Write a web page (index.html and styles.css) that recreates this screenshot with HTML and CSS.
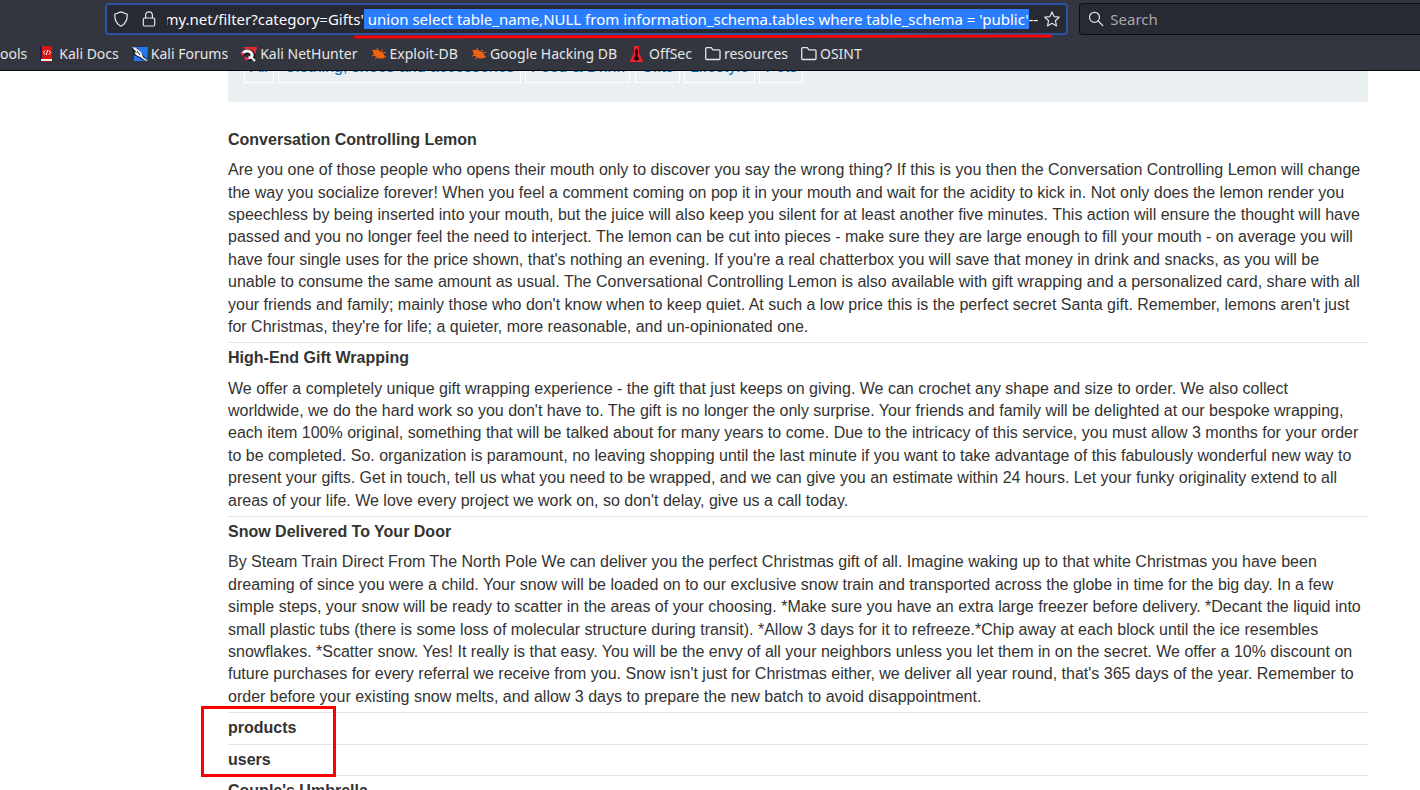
FILE: index.html
```html
<!DOCTYPE html>
<html lang="en">
<head>
<meta charset="utf-8">
<title>Gifts</title>
<link rel="stylesheet" href="styles.css">
</head>
<body>
<header class="chrome">
  <div class="toolbar">
    <div class="urlbar">
      <svg class="icon" viewBox="0 0 16 16" aria-hidden="true"><path d="M8 .9 14.3 3.3C14.4 9.500 12 13.400 8 15.200 4 13.400 1.600 9.500 1.700 3.300Z"/></svg>
      <svg class="icon lock" viewBox="0 0 16 16" aria-hidden="true"><rect x="2.300" y="7" width="11.400" height="8" rx="1.500"/><path d="M4.600 7V4.200a3.400 3.400 0 0 1 6.800 0V7"/></svg>
      <input class="url-input" id="url" type="text" aria-label="Address" spellcheck="false" value="https://academy.net/filter?category=Gifts' union select table_name,NULL from information_schema.tables where table_schema = 'public'--">
      <button class="star" type="button" aria-label="Bookmark this page"><svg class="icon" viewBox="0 0 16 16" aria-hidden="true"><path d="m8 .9 2.100 4.700 5.100.6-3.800 3.500 1.100 5.200L8 12.300l-4.500 2.600 1.100-5.200L.8 6.200l5.100-.6Z"/></svg></button>
    </div>
    <div class="searchbar">
      <svg class="icon" viewBox="0 0 16 16" aria-hidden="true"><circle cx="6.500" cy="6.300" r="5"/><path d="m10.200 10 4.600 4.600"/></svg>
      <input class="search-input" type="text" aria-label="Search" placeholder="Search">
    </div>
  </div>
  <nav class="bookmarks" aria-label="Bookmarks">
    <a class="bookmark" href="#">ools</a>
    <a class="bookmark" href="#"><svg class="fav" viewBox="0 0 16 16" aria-hidden="true"><path fill="#172554" d="M0 0h3v16H1l-1-1z"/><path fill="#d91414" d="M2 0h10v13H2z"/><path fill="#eee" d="M1 13h11v2H1z"/><path fill="#a10e12" d="M1 15h11v1H1z"/><path class="thin" d="M5 4.500 3.500 6.500 5 8.500M9 4.500l1.500 2-1.500 2M7.700 4 6.300 9"/></svg>Kali Docs</a>
    <a class="bookmark" href="#"><svg class="fav" viewBox="0 0 16 16" aria-hidden="true"><path fill="#2378ef" d="M2 1h14l-1 14H2z"/><path fill="#111722" d="M0 2 5 2l10 12-2 1L2 9z"/><path fill="#f4f4f4" d="m0 1 4 1 5 4 2 5 5 4-3-.4-4-3-5-2.600-2-3 3 1z"/><path stroke="#333" d="m5 5 3 4"/></svg>Kali Forums</a>
    <a class="bookmark" href="#"><svg class="fav" viewBox="0 0 16 16" aria-hidden="true"><path fill="#e92831" d="M2 1h14l-3 12z"/><path fill="none" stroke="#111" stroke-width="5" d="M1.500 8.500c3-4 8-4 10 0 1 3-2 4-5 4"/><path fill="none" stroke="#f5f5f5" stroke-width="3" d="M1 8c3-4 8-4 10 0 1 3-2 4-4 4"/><path stroke="#f5f5f5" stroke-width="2" d="m9 10 5 5"/><path stroke="#e92858" stroke-width="3" d="m.5 9 2-2M3.500 12l4 1"/></svg>Kali NetHunter</a>
    <a class="bookmark" href="#"><svg class="fav" viewBox="0 0 16 16" aria-hidden="true"><path fill="#ef6310" d="M2 5c2-2 5-1 6 0 3 0 5 3 6 6-2 2-6 2-8 0-2 0-4-3-4-6Z"/><path class="legs" d="m1 4 3 2M6 2l2 4M10 5l2-1M11 7l4-.5M1 10l4-1M4 13l3-2M13 10l2 1"/></svg>Exploit-DB</a>
    <a class="bookmark" href="#"><svg class="fav" viewBox="0 0 16 16" aria-hidden="true"><path fill="#ef6310" d="M2 5c2-2 5-1 6 0 3 0 5 3 6 6-2 2-6 2-8 0-2 0-4-3-4-6Z"/><path class="legs" d="m1 4 3 2M6 2l2 4M10 5l2-1M11 7l4-.5M1 10l4-1M4 13l3-2M13 10l2 1"/></svg>Google Hacking DB</a>
    <a class="bookmark" href="#"><svg class="fav" viewBox="0 0 16 16" aria-hidden="true"><path fill="#f0202a" d="M4 0h5v7l4 8v1H0v-1l4-8z"/><path fill="#24060a" d="m6.500 2 1.500 3-.5 5 2 3-3 2-3-2 2-3L5 5z"/></svg>OffSec</a>
    <a class="bookmark" href="#"><svg class="fav folder" viewBox="0 0 16 16" aria-hidden="true"><path d="M1.500 13.500H14a1 1 0 0 0 1-1V4.800a1 1 0 0 0-1-1H8L6.300 1.700H1.700a1 1 0 0 0-1 1v9.800a1 1 0 0 0 1 1Z"/></svg>resources</a>
    <a class="bookmark" href="#"><svg class="fav folder" viewBox="0 0 16 16" aria-hidden="true"><path d="M1.500 13.500H14a1 1 0 0 0 1-1V4.800a1 1 0 0 0-1-1H8L6.300 1.700H1.700a1 1 0 0 0-1 1v9.800a1 1 0 0 0 1 1Z"/></svg>OSINT</a>
  </nav>
</header>
<main class="page">
  <nav class="filters" aria-label="Categories">
    <a class="filter" href="#">All</a>
    <a class="filter" href="#">Clothing, shoes and accessories</a>
    <a class="filter" href="#">Food &amp; Drink</a>
    <a class="filter" href="#">Gifts</a>
    <a class="filter" href="#">Lifestyle</a>
    <a class="filter" href="#">Pets</a>
  </nav>
  <table class="products">
    <tbody>
      <tr><th>Conversation Controlling Lemon</th></tr>
      <tr><td>Are you one of those people who opens their mouth only to discover you say the wrong thing? If this is you then the Conversation Controlling Lemon will change the way you socialize forever! When you feel a comment coming on pop it in your mouth and wait for the acidity to kick in. Not only does the lemon render you speechless by being inserted into your mouth, but the juice will also keep you silent for at least another five minutes. This action will ensure the thought will have passed and you no longer feel the need to interject. The lemon can be cut into pieces - make sure they are large enough to fill your mouth - on average you will have four single uses for the price shown, that's nothing an evening. If you're a real chatterbox you will save that money in drink and snacks, as you will be unable to consume the same amount as usual. The Conversational Controlling Lemon is also available with gift wrapping and a personalized card, share with all your friends and family; mainly those who don't know when to keep quiet. At such a low price this is the perfect secret Santa gift. Remember, lemons aren't just for Christmas, they're for life; a quieter, more reasonable, and un-opinionated one.</td></tr>
      <tr><th>High-End Gift Wrapping</th></tr>
      <tr><td>We offer a completely unique gift wrapping experience - the gift that just keeps on giving. We can crochet any shape and size to order. We also collect worldwide, we do the hard work so you don't have to. The gift is no longer the only surprise. Your friends and family will be delighted at our bespoke wrapping, each item 100% original, something that will be talked about for many years to come. Due to the intricacy of this service, you must allow 3 months for your order to be completed. So. organization is paramount, no leaving shopping until the last minute if you want to take advantage of this fabulously wonderful new way to present your gifts. Get in touch, tell us what you need to be wrapped, and we can give you an estimate within 24 hours. Let your funky originality extend to all areas of your life. We love every project we work on, so don't delay, give us a call today.</td></tr>
      <tr><th>Snow Delivered To Your Door</th></tr>
      <tr><td>By Steam Train Direct From The North Pole We can deliver you the perfect Christmas gift of all. Imagine waking up to that white Christmas you have been dreaming of since you were a child. Your snow will be loaded on to our exclusive snow train and transported across the globe in time for the big day. In a few simple steps, your snow will be ready to scatter in the areas of your choosing. *Make sure you have an extra large freezer before delivery. *Decant the liquid into small plastic tubs (there is some loss of molecular structure during transit). *Allow 3 days for it to refreeze.*Chip away at each block until the ice resembles snowflakes. *Scatter snow. Yes! It really is that easy. You will be the envy of all your neighbors unless you let them in on the secret. We offer a 10% discount on future purchases for every referral we receive from you. Snow isn't just for Christmas either, we deliver all year round, that's 365 days of the year. Remember to order before your existing snow melts, and allow 3 days to prepare the new batch to avoid disappointment.</td></tr>
      <tr><th>products</th></tr>
      <tr><th>users</th></tr>
      <tr><th>Couple's Umbrella</th></tr>
    </tbody>
  </table>
</main>
<svg class="underline" viewBox="0 0 698 5" aria-hidden="true"><path d="M1 3 697 2"/></svg>
<div class="highlight"></div>
<script src="script.js"></script>
</body>
</html>
```
FILE: styles.css
```css
* { box-sizing: border-box; }
body {
  margin: 0;
  height: 100vh;
  display: flex;
  flex-direction: column;
  overflow: hidden;
  position: relative;
  background: #fff;
  color: #333332;
  font: 16px/1.4 "Liberation Sans", Arial, sans-serif;
}
.chrome {
  flex: none;
  background: #33363e;
  border-bottom: 1px solid #08080a;
  color: #e6e6e8;
  font: 15px/20px "Noto Sans", sans-serif;
}
.toolbar {
  display: flex;
  gap: 11px;
  padding: 3px 0 3px 105px;
}
.urlbar, .searchbar {
  display: flex;
  align-items: center;
  height: 32px;
  background: #272933;
}
.urlbar {
  flex: 948 1 0;
  border: 2px solid #2a54a3;
  border-radius: 4px;
  padding: 0 6px;
}
.searchbar {
  flex: 332 1 0;
  border: 1px solid #0d0e12;
  border-right: 0;
  border-radius: 4px 0 0 4px;
  padding-left: 8px;
}
.icon {
  display: block;
  flex: none;
  width: 16px;
  height: 16px;
  fill: none;
  stroke: #e4e4e6;
  stroke-width: 1.2;
  stroke-linejoin: round;
  stroke-linecap: round;
}
.lock { margin: 0 10px 0 12px; }
.url-input, .search-input {
  flex: 1;
  min-width: 0;
  height: 24px;
  border: 0;
  padding: 0;
  outline: 0;
  background: transparent;
  color: #fbfbfe;
  font: inherit;
}
.search-input { margin-left: 6px; }
.search-input::placeholder { color: #a9a9ac; opacity: 1; }
.url-input { caret-color: transparent; }
.url-input::selection { background: #2a7dff; color: #fff; }
.star {
  margin-left: 6px;
  padding: 0;
  border: 0;
  background: none;
}
.bookmarks {
  display: flex;
  gap: 13px;
  height: 32px;
  align-items: center;
  font-size: 14px;
  white-space: nowrap;
}
.bookmark {
  display: flex;
  align-items: center;
  gap: 3px;
  color: inherit;
  text-decoration: none;
}
.fav { width: 16px; height: 16px; flex: none; }
.thin { fill: none; stroke: #fff; stroke-width: 1; }
.legs { fill: none; stroke: #ef6310; stroke-width: 1; }
.folder { fill: none; stroke: #e6e6e8; stroke-width: 1.3; stroke-linejoin: round; }
.page {
  flex: 1;
  min-height: 0;
  overflow: hidden;
  padding: 0 52px 0 228px;
}
.filters {
  margin-top: -40px;
  padding: 16px 16px 19px;
  background: #eaeff2;
}
.filter {
  display: inline-block;
  padding: 8px 5px 4px;
  border: 1px solid #fff;
  color: #0071bc;
  text-decoration: none;
}
.products {
  width: 100%;
  margin-top: 1lh;
  border-spacing: 0;
}
.products th, .products td {
  padding: 4px 4px 4px 0;
  text-align: left;
}
.products tr + tr th { border-top: 1px solid #e2e3e5; }
.underline {
  position: absolute;
  left: 354px;
  top: 34px;
  width: 698px;
  height: 5px;
  stroke: #f00;
  stroke-width: 3;
  stroke-linecap: round;
}
.highlight {
  position: absolute;
  left: 201px;
  top: 706px;
  width: 135px;
  height: 71px;
  border: 3px solid #f00;
}
```
FILE: script.js
```js
const url = document.getElementById("url");
const start = url.value.indexOf("'") + 1;
url.focus();
url.setSelectionRange(start, url.value.length - 2);
url.scrollLeft = url.scrollWidth;
```
